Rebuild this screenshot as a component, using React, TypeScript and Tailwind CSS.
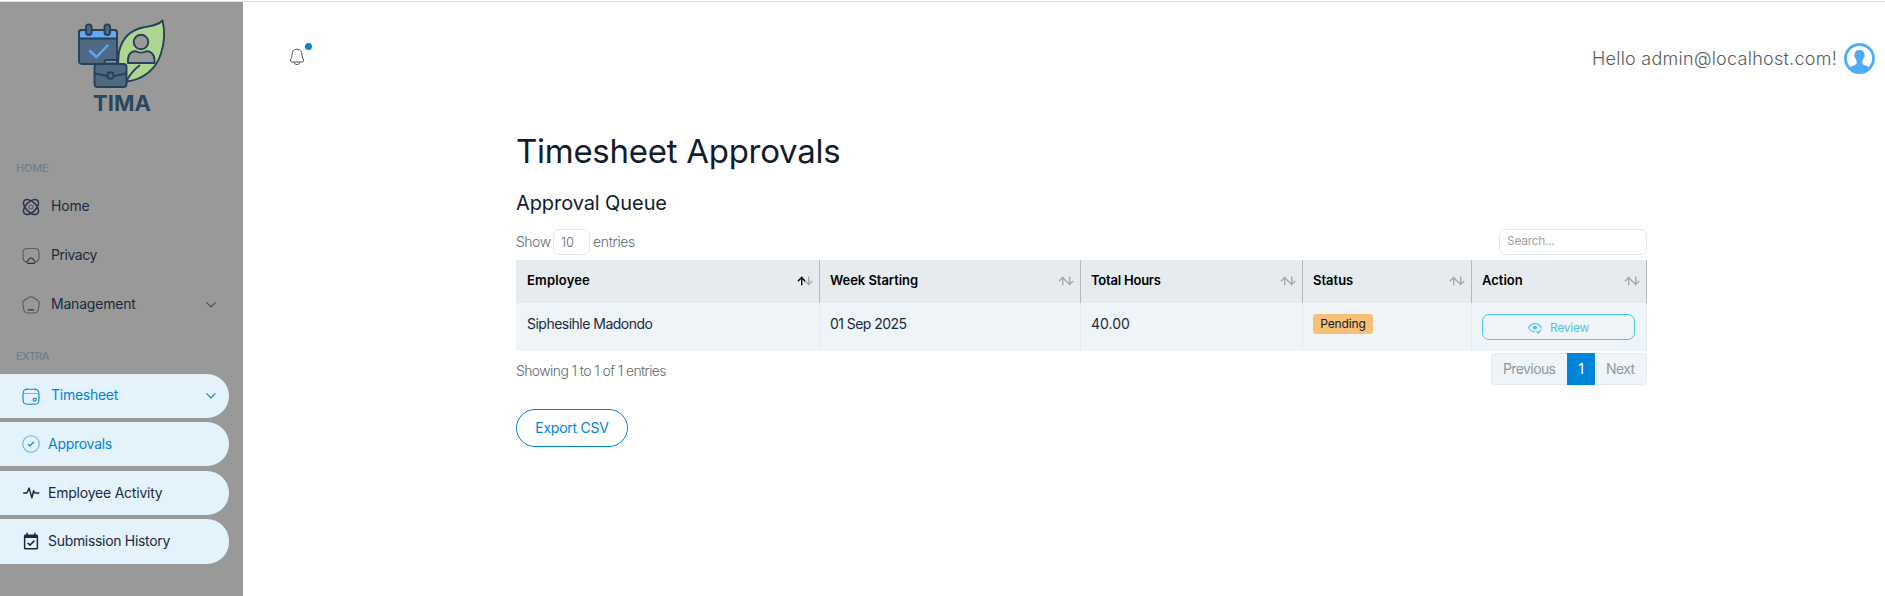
import React from 'react';

type IconProps = { className?: string };

const svgProps = {
  width: 18,
  height: 18,
  viewBox: '0 0 24 24',
  fill: 'none',
  stroke: 'currentColor',
  strokeWidth: 1.5,
  strokeLinecap: 'round' as const,
  strokeLinejoin: 'round' as const,
};

const AtomIcon = () => (
  <svg {...svgProps}>
    <path
      d="M4.600 4.600C7 2.200 12.200 4.100 16.100 7.900s5.700 9 3.300 11.500-7.700.5-11.500-3.300S2.200 7 4.600 4.600Z M19.400 4.600c2.400 2.400.5 7.600-3.300 11.500s-9 5.700-11.500 3.300-.5-7.700 3.300-11.500S17 2.200 19.400 4.600Z"
      strokeWidth="1.700"
      transform="translate(12 12) scale(1.180) translate(-12 -12)"
    />
    <circle cx="12" cy="12" r="2.600" opacity="0.600" />
  </svg>
);

const AirplayIcon = () => (
  <svg {...svgProps}>
    <path
      d="M5 19.800C2.300 18.800 1.300 17.500 1.300 13.500V9C1.300 3.500 2.500 2 8 2h8c5.500 0 6.700 1.500 6.700 7v4.500c0 4-1 5.300-3.700 6.300"
      opacity="0.600"
    />
    <path d="M9.300 16.300 7.200 18.700C5.900 20.300 6.300 21.800 8.500 21.800h7c2.200 0 2.600-1.500 1.300-3.100l-2.100-2.400c-2-2.200-3.400-2.200-5.400 0Z" />
  </svg>
);

const HomeIcon = () => (
  <svg {...svgProps}>
    <path
      d="M9.500 1.800 3.500 5.300C1.400 6.700.8 8.300 1.100 10.700l1.300 7.600c.5 3 1.800 4.400 4.900 4.400h9.400c3.100 0 4.400-1.400 4.900-4.400l1.300-7.600c.3-2.400-.3-4-2.400-5.400L14.500 1.800C12.900.9 11.100.9 9.500 1.800Z"
      opacity="0.600"
    />
    <path d="M8.500 18.500h7" strokeWidth="1.800" />
  </svg>
);

const CalendarIcon = () => (
  <svg {...svgProps}>
    <path d="M1.300 12c0-7.500 1-9 6.700-9h8c5.700 0 6.700 1.500 6.700 9v2c0 7.500-1 9-6.700 9H8c-5.700 0-6.700-1.500-6.700-9Z" />
    <path d="M6.500 3V1.500M17.500 3V1.500M2 8.700h20" opacity="0.500" />
    <circle cx="17" cy="17" r="2" />
  </svg>
);

const CheckCircleIcon = () => (
  <svg {...svgProps}>
    <circle cx="12" cy="12" r="11" opacity="0.550" />
    <path d="m8.500 12.500 2 2 5-5" strokeWidth="1.700" />
  </svg>
);

const PulseIcon = () => (
  <svg width="18" height="18" viewBox="0 0 24 24" fill="none" stroke="currentColor" strokeWidth="2" strokeLinejoin="round">
    <path d="M1.500 12H6.500l3-6.500 3.700 13 2.300-9.500 1.700 3H23" />
  </svg>
);

const CalendarCheckIcon = () => (
  <svg width="18" height="18" viewBox="0 0 24 24" fill="none" stroke="currentColor">
    <rect x="3.500" y="4.300" width="17" height="18" rx="1" strokeWidth="2" />
    <path d="M2.800 6.500h18.400" strokeWidth="3" />
    <path d="M6.700 1v4M17.300 1v4" strokeWidth="2" />
    <path d="m7.500 14.500 3.200 3 5.800-6" strokeWidth="2" />
  </svg>
);

const Chevron = ({ className }: IconProps) => (
  <svg className={className} width="12" height="8" viewBox="0 0 12 8" fill="none" stroke="currentColor" strokeWidth="1.150">
    <path d="m1.500 1.300 4.500 4.700 4.500-4.700" />
  </svg>
);

const BellIcon = () => (
  <svg width="16" height="18" viewBox="0 0 16 18" fill="none" stroke="currentColor" strokeWidth="1">
    <path d="M8 1.200C4.800 1.200 3.200 3.400 3.100 6c-.1 2.800-.5 3.600-1.300 5C.9 12.500 1.400 14 3.200 14h9.600c1.800 0 2.300-1.500 1.400-3-.8-1.400-1.200-2.200-1.300-5-.1-2.600-1.700-4.800-4.900-4.800Z" />
    <path d="M5 14.200c.4 1.500 1.500 2.300 3 2.300s2.600-.8 3-2.300" />
  </svg>
);

const AvatarIcon = () => (
  <svg width="31" height="31" viewBox="0 0 31 31">
    <circle cx="15.500" cy="15.500" r="14" fill="#fff" stroke="#4dabf7" strokeWidth="2.800" />
    <path
      fill="#4dabf7"
      d="M15.500 7c3.300 0 5 2 4.900 5 .5.300.5 1.900-.5 2.600-.3 1.400-.8 2.400-1.500 3.200v2.700c.8 1.800 5.100 2.300 7.600 4.400a14 14 0 0 1-21 0c2.500-2.100 6.800-2.600 7.600-4.400v-2.700c-.7-.8-1.200-1.800-1.500-3.200-1-.7-1-2.300-.5-2.600-.1-3 1.600-5 4.900-5Z"
    />
  </svg>
);

const SortIcon = ({ active }: { active?: boolean }) => (
  <svg width="16" height="10" viewBox="0 0 16 10" fill="none" strokeWidth="1.400">
    <path d="M4.700 9.200V1.600M1 5.200 4.700 1.300l3.300 3.900" stroke={active ? '#000' : '#a5a9ad'} />
    <path d="M11.700.5v7.800M8.200 4.900l3.500 3.700 3.500-3.700" stroke="#a5a9ad" />
  </svg>
);

const ReviewIcon = () => (
  <svg width="14" height="12" viewBox="0 0 14 12" fill="none" stroke="currentColor" strokeWidth="1.100" strokeLinecap="round">
    <path d="M6.500 9.900C4.300 9.900 2.600 8.700 1.200 7c-.7-.8-.7-1.600 0-2.400C2.600 2.700 4.400 1.500 6.900 1.500s4.300 1.200 5.700 3.100c.4.500.5.900.5 1.400" />
    <circle cx="6.900" cy="5.600" r="1.500" fill="currentColor" />
    <path d="m8.700 9.600 1.400 1.500 2.700-2.900" />
  </svg>
);

const Logo = () => (
  <svg width="92" height="98" viewBox="0 0 92 98" fill="none" strokeLinejoin="round" strokeLinecap="round">
    <g stroke="#26415a" strokeWidth="1.900">
      <path d="M86.500 3.500C82 8.500 75 9 67 10.500 55 13 46 21 43 35c-1 6-1 17-1 25l9 4.500c16-2 29-12 34-28 3.500-11 4-23 1.500-33Z" fill="#b0d593" />
      <path d="M51 63c3.500-6.500 6.500-10 12.500-14.500" />
      <circle cx="65" cy="25" r="7.300" fill="#999" />
      <path d="M52 46v-3c0-6 3.800-9.500 8.500-8.500 3 1.500 6 1.500 9 0 4.700-1 9 2.500 9 8.500v3Z" fill="#999" />
      <rect x="3" y="13" width="38" height="34" rx="2.800" fill="#506982" />
      <path d="M3 21.500V15.500C3 14 4 13 5.500 13h33c1.600 0 2.500 1 2.500 2.500v6Z" fill="#65a8ee" />
      <rect x="10" y="7.500" width="5.600" height="10.500" rx="2.700" fill="#506982" />
      <rect x="28.500" y="7.500" width="5.600" height="10.500" rx="2.700" fill="#506982" />
      <path d="M28.500 46.500V45c0-1.300.8-2 2-2H41v3.500Z" fill="#999" />
      <rect x="18.500" y="47" width="32" height="23" rx="3" fill="#506982" />
      <path d="M19 56.500 31 59h7L50 56.500" />
      <rect x="31.700" y="55.500" width="5.600" height="6" rx="1.200" fill="#506982" />
    </g>
    <path d="m14 34 6.500 6 11-11.500" stroke="#5ba7f8" strokeWidth="2.500" />
    <text x="46" y="94" textAnchor="middle" fill="#2b475e" className="font-['Inter'] text-[22px] font-bold">
      TIMA
    </text>
  </svg>
);

const NavHeading = ({ children }: { children: React.ReactNode }) => (
  <div className="h-4 pl-4 text-[11px] leading-4 font-medium text-[#71808c]">{children}</div>
);

const NavRow = ({ icon, children, chevron }: { icon: React.ReactNode; children: React.ReactNode; chevron?: boolean }) => (
  <div className="flex h-[44px] w-[229px] items-center pl-[22px] text-sm text-[#1b2a41]">
    <span className="mt-[2px] mr-[11px] w-[18px] opacity-90">{icon}</span>
    {children}
    {chevron && <Chevron className="mt-[2px] mr-[12px] ml-auto opacity-70" />}
  </div>
);

const Pill = ({
  icon,
  children,
  className,
  chevron,
}: {
  icon: React.ReactNode;
  children: React.ReactNode;
  className: string;
  chevron?: boolean;
}) => (
  <div className={'flex w-[229px] shrink-0 items-center rounded-r-[22px] bg-[#e4f3fb] pl-[22px] text-sm ' + className}>
    <span className="mr-2 w-[18px]">{icon}</span>
    {children}
    {chevron && <Chevron className="mr-[12px] ml-auto" />}
  </div>
);

const headCell =
  'flex h-[43px] items-center justify-between border-r border-[#b3b8bc] bg-[#e6ebef] pr-[6px] pb-[2px] pl-[10px] text-[13px] font-semibold text-black first:pl-[11px]';
const bodyCell =
  'h-[48px] border-r border-[#e3eaf0] bg-[#eff4f9] pl-[10px] pt-[10px] text-sm leading-[21px] text-[#1b2a41]';

export default function App() {
  return (
    <div className="flex h-[596px] w-[1885px] flex-col overflow-hidden bg-white font-['Inter',sans-serif]">
      <div className="mt-px h-px shrink-0 bg-[#dfe2e5]" />
      <div className="flex flex-1">
        <aside className="flex w-[243px] flex-col bg-[#999999]">
          <div className="h-[158px] pt-[15px] pl-[76px]">
            <Logo />
          </div>
          <NavHeading>
            <span className="tracking-[-0.2px]">HOME</span>
          </NavHeading>
          <div className="mt-[8px] flex flex-col gap-[5px]">
            <NavRow icon={<AtomIcon />}>
              <span className="tracking-[-0.2px]">Home</span>
            </NavRow>
            <NavRow icon={<AirplayIcon />}>
              <span className="tracking-[-0.45px]">Privacy</span>
            </NavRow>
            <NavRow icon={<HomeIcon />} chevron>
              <span className="tracking-[-0.2px]">Management</span>
            </NavRow>
          </div>
          <div className="mt-[22px]">
            <NavHeading>
              <span className="tracking-[-0.6px]">EXTRA</span>
            </NavHeading>
          </div>
          <Pill icon={<CalendarIcon />} className="mt-[10px] h-[44px] text-[#0085db]" chevron>
            <span className="pb-[2px] pl-[3px] tracking-[-0.27px]">Timesheet</span>
          </Pill>
          <Pill icon={<CheckCircleIcon />} className="mt-[4px] h-[44px] text-[#0085db]">
            <span className="tracking-[-0.27px]">Approvals</span>
          </Pill>
          <Pill icon={<PulseIcon />} className="mt-[5px] h-[44px] text-[#1b2a41]">
            <span className="tracking-[-0.22px]">Employee Activity</span>
          </Pill>
          <Pill icon={<CalendarCheckIcon />} className="mt-[4px] h-[45px] pb-[2px] text-[#1b2a41]">
            <span className="tracking-[-0.31px]">Submission History</span>
          </Pill>
        </aside>

        <main className="flex flex-1 flex-col">
          <header className="flex h-[112px] items-center justify-between pr-[10px] pl-[46px]">
            <div className="relative -mt-[2px] text-[#555]">
              <BellIcon />
              <span className="absolute -top-[5px] left-[16px] size-[7px] rounded-full bg-[#0085db]" />
            </div>
            <div className="flex items-center gap-[7px]">
              <span className="text-[18px] font-light tracking-[0.26px] text-[#5c5c5c]">Hello admin@localhost.com!</span>
              <AvatarIcon />
            </div>
          </header>

          <section className="ml-[273px] w-[1131px]">
            <h1 className="mt-[17px] h-[40px] text-[33px] leading-[40px] tracking-[-0.27px] text-[#111c2d]">
              Timesheet Approvals
            </h1>
            <h2 className="mt-[19px] h-[26px] text-[20px] leading-[26px] tracking-[-0.09px] text-[#111c2d]">Approval Queue</h2>

            <div className="mt-[13px] flex h-[26px] items-center justify-between text-sm font-light text-[#5f6b73]">
              <div className="flex items-center">
                <span className="w-[37px] tracking-[-0.5px]">Show</span>
                <span className="flex h-[26px] w-[37px] items-center rounded-[7px] border border-[#e0e6eb] pl-[7px] text-[13px]">10</span>
                <span className="ml-[3px] tracking-[-0.33px]">entries</span>
              </div>
              <div className="flex h-[26px] w-[148px] items-center rounded-[7px] border border-[#e0e6eb] pb-[2px] pl-[7px] text-[12px] font-normal tracking-[-0.3px] text-[#a0a0a0]">
                Search...
              </div>
            </div>

            <div className="mt-[5px] grid grid-cols-[304px_261px_222px_169px_175px]">
              <div className={headCell}>
                <span className="tracking-[0.18px]">Employee</span>
                <SortIcon active />
              </div>
              <div className={headCell}>
                <span className="tracking-[-0.05px]">Week Starting</span>
                <SortIcon />
              </div>
              <div className={headCell}>
                <span className="tracking-[-0.22px]">Total Hours</span>
                <SortIcon />
              </div>
              <div className={headCell}>
                <span>Status</span>
                <SortIcon />
              </div>
              <div className={headCell}>
                <span>Action</span>
                <SortIcon />
              </div>
              <div className={bodyCell}>
                <span className="pl-px tracking-[-0.51px]">Siphesihle Madondo</span>
              </div>
              <div className={bodyCell}>
                <span className="tracking-[-0.55px]">01 Sep 2025</span>
              </div>
              <div className={bodyCell}>40.00</div>
              <div className="h-[48px] border-r border-[#e3eaf0] bg-[#eff4f9] pt-[11px] pl-[10px]">
                <span className="flex h-5 w-[60px] items-center justify-center rounded-[3px] bg-[#f8c076] text-[12px] tracking-[-0.15px] text-[#111c2d]">
                  Pending
                </span>
              </div>
              <div className="h-[48px] border-r border-[#e3eaf0] bg-[#eff4f9] pt-[11px] pl-[10px]">
                <div className="flex h-[26px] w-[153px] items-center justify-center gap-[8px] rounded-[7px] border border-[#46caeb] pt-[2px] text-[12px] tracking-[-0.26px] text-[#46caeb]">
                  <ReviewIcon />
                  Review
                </div>
              </div>
            </div>

            <div className="mt-[2px] flex h-[32px] items-center justify-between">
              <span className="pt-[4px] text-sm font-light tracking-[-0.61px] text-[#5f6b73]">Showing 1 to 1 of 1 entries</span>
              <div className="flex h-[32px] w-[156px] overflow-hidden rounded-[4px] text-sm leading-[29px] text-[#909aa1]">
                <span className="w-[76px] rounded-l-[4px] border border-r-0 border-[#e2e9ef] bg-[#eff4f9] pl-[11px] tracking-[-0.6px]">
                  Previous
                </span>
                <span className="w-[28px] bg-[#0085db] pt-px text-center text-white">1</span>
                <span className="w-[52px] rounded-r-[4px] border border-l-0 border-[#e2e9ef] bg-[#eff4f9] pl-[11px] tracking-[-0.6px]">
                  Next
                </span>
              </div>
            </div>

            <button className="mt-[24px] flex h-[38px] w-[112px] items-center justify-center rounded-full border border-[#0085db] text-sm tracking-[-0.25px] text-[#0085db]">
              Export CSV
            </button>
          </section>
        </main>
      </div>
    </div>
  );
}
